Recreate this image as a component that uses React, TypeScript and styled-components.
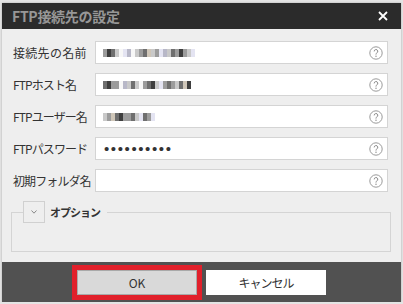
import React from 'react';
import styled, { createGlobalStyle } from 'styled-components';

const GlobalStyle = createGlobalStyle`
  html, body {
    margin: 0;
    padding: 0;
    background: #e4e4e4;
  }
  body {
    font-family: "Noto Sans CJK JP", "Noto Sans", sans-serif;
  }
`;

const Dialog = styled.div`
  width: 399px;
  margin: 3px 0 0 2px;
  box-shadow: 0 0 2px rgba(0, 0, 0, 0.25);
`;

const TitleBar = styled.div`
  height: 26px;
  background: #2b2b2b;
  display: flex;
  align-items: center;
  justify-content: space-between;
  padding: 0 13px 0 10px;
`;

const Title = styled.div`
  font-size: 14px;
  font-weight: 700;
  color: #979797;
  letter-spacing: -0.3px;
`;

const CloseButton = styled.button`
  border: 0;
  padding: 0;
  background: transparent;
  width: 10px;
  height: 10px;
  display: flex;
  cursor: pointer;
`;

const Body = styled.div`
  background: #eeeeee;
  padding: 12px 10px 10px 9px;
`;

const Form = styled.div`
  display: grid;
  grid-template-columns: 82px 1fr;
  grid-auto-rows: 23px;
  row-gap: 9px;
  padding: 0 3px 0 2px;
  margin-bottom: 9px;
`;

const Label = styled.label<{ $kana?: boolean }>`
  display: flex;
  align-items: center;
  font-size: 12px;
  letter-spacing: ${({ $kana }) => ($kana ? '-0.9px' : '0.3px')};
  color: #333;
  white-space: nowrap;
`;

const Field = styled.div`
  display: flex;
  align-items: center;
  background: #fff;
  border: 1px solid #d4d4d4;
  padding: 0 4px 0 7px;
`;

const FieldValue = styled.div`
  flex: 1;
  display: flex;
  align-items: center;
  height: 100%;
`;

const Mosaic = styled.div`
  display: flex;
  height: 8px;
`;

const Cell = styled.span`
  width: 4px;
  height: 8px;
`;

const Dots = styled.span`
  font-family: "Liberation Sans", sans-serif;
  font-size: 15px;
  letter-spacing: 1.6px;
  color: #333;
  padding-left: 1px;
`;

const Options = styled.fieldset`
  margin: 0;
  padding: 0;
  border: 1px solid #d4d4d4;
`;

const Legend = styled.legend`
  display: flex;
  align-items: center;
  gap: 5px;
  padding: 0 7px 0 0;
  margin-left: 11px;
  font-size: 11px;
  font-weight: 700;
  letter-spacing: -1px;
  color: #333;
`;

const Toggle = styled.button`
  width: 22px;
  height: 22px;
  box-sizing: border-box;
  border: 1px solid #d0d0d0;
  background: #eeeeee;
  padding: 0;
  display: flex;
  align-items: center;
  justify-content: center;
`;

const OptionsContent = styled.div`
  height: 28px;
`;

const Footer = styled.div`
  height: 40px;
  background: #515151;
  display: flex;
  align-items: center;
  justify-content: center;
  gap: 9px;
`;

const Button = styled.button<{ $primary?: boolean }>`
  width: 120px;
  height: 25px;
  box-sizing: border-box;
  font-family: "Noto Sans CJK JP", "Noto Sans", sans-serif;
  font-size: 12px;
  letter-spacing: ${({ $primary }) => ($primary ? '0' : '-1px')};
  color: #333;
  border: 1px solid ${({ $primary }) => ($primary ? '#a9a9a9' : '#ffffff')};
  background: ${({ $primary }) => ($primary ? '#d9d9d9' : '#ffffff')};
  outline: ${({ $primary }) => ($primary ? '5px solid #e1202b' : 'none')};
  padding: 0;
`;

const shades: Record<string, string> = {
  '.': '#f7f7f7',
  a: '#3e3e3e',
  b: '#6f6f6f',
  c: '#9c9c9c',
  d: '#c9c9c9',
  e: '#e4e4f2',
  f: '#cfc6b8',
  g: '#b8b8c8',
};

const MosaicText: React.FC<{ pattern: string }> = ({ pattern }) => (
  <Mosaic>
    {pattern.split('').map((ch, i) => (
      <Cell key={i} style={{ background: shades[ch] }} />
    ))}
  </Mosaic>
);

const HelpIcon = () => (
  <svg width="14" height="14" viewBox="0 0 14 14">
    <circle cx="7" cy="7" r="6.2" fill="none" stroke="#9a9a9a" strokeWidth="1" />
    <path d="M5.2 5.4a1.8 1.8 0 1 1 2.5 1.6c-.5.3-.7.6-.7 1.2v.4" fill="none" stroke="#8a8a8a" strokeWidth="1" />
    <circle cx="7" cy="10.2" r="0.7" fill="#8a8a8a" />
  </svg>
);

const fields: { label: string; kana?: boolean; value?: string; password?: boolean }[] = [
  { label: '接続先の名前', value: 'cabd.eg.dcbfdcegdbcacde' },
  { label: 'FTPホスト名', kana: true, value: 'bacc.gdbd.cbadecbcdbfa' },
  { label: 'FTPユーザー名', kana: true, value: 'dcfbaccbdebce' },
  { label: 'FTPパスワード', kana: true, password: true },
  { label: '初期フォルダ名', kana: true },
];

const App: React.FC = () => {
  return (
    <>
      <GlobalStyle />
      <Dialog>
        <TitleBar>
          <Title>FTP接続先の設定</Title>
          <CloseButton aria-label="閉じる">
            <svg width="10" height="10" viewBox="0 0 10 10">
              <path d="M1 1l8 8M9 1l-8 8" stroke="#fff" strokeWidth="1.8" />
            </svg>
          </CloseButton>
        </TitleBar>
        <Body>
          <Form>
            {fields.map((f) => (
              <React.Fragment key={f.label}>
                <Label $kana={f.kana}>{f.label}</Label>
                <Field>
                  <FieldValue>
                    {f.value && <MosaicText pattern={f.value} />}
                    {f.password && <Dots>••••••••••</Dots>}
                  </FieldValue>
                  <HelpIcon />
                </Field>
              </React.Fragment>
            ))}
          </Form>
          <Options>
            <Legend>
              <Toggle aria-label="展開">
                <svg width="6" height="4" viewBox="0 0 6 4">
                  <path d="M0.5 0.5L3 3.2L5.5 0.5" fill="none" stroke="#888" strokeWidth="1" />
                </svg>
              </Toggle>
              オプション
            </Legend>
            <OptionsContent />
          </Options>
        </Body>
        <Footer>
          <Button $primary>OK</Button>
          <Button>キャンセル</Button>
        </Footer>
      </Dialog>
    </>
  );
};

export default App;
